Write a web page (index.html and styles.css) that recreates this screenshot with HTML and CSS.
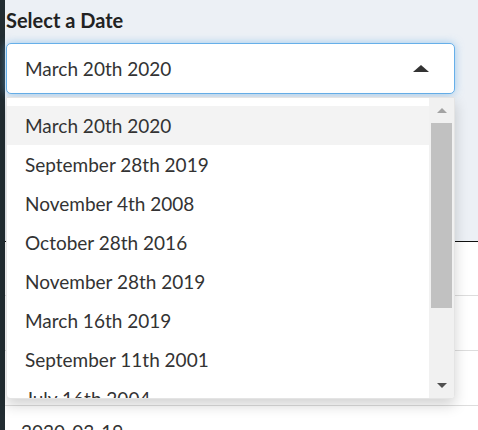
FILE: index.html
```html
<!DOCTYPE html>
<html>
<head>
<meta charset="utf-8">
<link rel="stylesheet" href="styles.css">
</head>
<body>
<div class="page">
  <aside class="sidebar"></aside>
  <main class="content">
    <div class="form-group">
      <label class="field-label">Select a Date</label>
      <div class="select-wrap">
        <div class="select">
          <span class="select-value">March 20th 2020</span>
          <span class="caret"></span>
        </div>
        <div class="dropdown">
          <ul class="options">
            <li class="option active">March 20th 2020</li>
            <li class="option">September 28th 2019</li>
            <li class="option">November 4th 2008</li>
            <li class="option">October 28th 2016</li>
            <li class="option">November 28th 2019</li>
            <li class="option">March 16th 2019</li>
            <li class="option">September 11th 2001</li>
            <li class="option">July 16th 2004</li>
            <li class="option">March 19th 2020</li>
          </ul>
          <div class="scrollbar">
            <div class="sb-btn"><span class="sb-arrow up"></span></div>
            <div class="sb-track"><div class="sb-thumb"></div></div>
            <div class="sb-btn"><span class="sb-arrow down"></span></div>
          </div>
        </div>
      </div>
    </div>
    <table class="data">
      <thead>
        <tr><th></th></tr>
      </thead>
      <tbody>
        <tr><td></td></tr>
        <tr><td></td></tr>
        <tr><td></td></tr>
        <tr><td>2020-03-19</td></tr>
      </tbody>
    </table>
  </main>
</div>
</body>
</html>
```

FILE: styles.css
```css
* { box-sizing: border-box; }
html, body { margin: 0; padding: 0; height: 100%; overflow: hidden; }
body {
  font-family: Lato, "Open Sans", sans-serif;
  color: #333;
  background: #ecf0f5;
}
.page { display: flex; height: 430px; overflow: hidden; }
.sidebar { width: 5px; flex: none; background: #222d32; }
.content { flex: 1; background: #ecf0f5; padding-top: 8px; }
.form-group { padding-left: 1px; }
.field-label {
  display: block;
  font-weight: 700;
  font-size: 20px;
  line-height: 25px;
  color: #222;
  margin-bottom: 10px;
}
.select-wrap { position: relative; width: 449px; }
.select {
  height: 51px;
  background: #fff;
  border: 1px solid #66afe9;
  border-radius: 5px;
  box-shadow: 0 0 8px rgba(102, 175, 233, 0.6);
  display: flex;
  align-items: center;
  justify-content: space-between;
  padding: 0 25px 0 18px;
  font-size: 19px;
  color: #333;
}
.caret {
  width: 0; height: 0;
  border-left: 8px solid transparent;
  border-right: 8px solid transparent;
  border-bottom: 7px solid #333;
}
.dropdown {
  position: absolute;
  top: 54px;
  left: 0;
  width: 449px;
  height: 302px;
  background: #fff;
  border: 1px solid #e4e4e4;
  border-radius: 0 0 4px 4px;
  box-shadow: 0 6px 14px rgba(0, 0, 0, 0.18);
  display: flex;
  overflow: hidden;
  z-index: 10;
}
.options {
  list-style: none;
  margin: 0;
  padding: 8px 0 0;
  flex: 1;
  overflow: hidden;
}
.option {
  height: 39px;
  line-height: 39px;
  padding-left: 18px;
  font-size: 19px;
  color: #333;
  white-space: nowrap;
}
.option.active { background: #f3f3f3; }
.scrollbar {
  width: 25px;
  flex: none;
  background: #f1f1f1;
  display: flex;
  flex-direction: column;
}
.sb-btn { height: 25px; display: flex; align-items: center; justify-content: center; flex: none; }
.sb-track { flex: 1; padding: 0 2px; }
.sb-thumb { height: 185px; background: #c1c1c1; }
.sb-arrow { width: 0; height: 0; border-left: 5px solid transparent; border-right: 5px solid transparent; }
.sb-arrow.up { border-bottom: 5px solid #a3a3a3; }
.sb-arrow.down { border-top: 5px solid #505050; }
.data {
  width: 100%;
  margin-top: 107px;
  border-collapse: collapse;
  background: #fff;
  font-size: 19px;
  line-height: 23px;
}
.data th {
  text-align: left;
  height: 40px;
  padding: 0 16px;
  border-bottom: 1px solid #111;
  background: #ecf0f5;
}
.data td {
  height: 55px;
  padding: 14px 16px 0;
  vertical-align: top;
  border-top: 1px solid #ddd;
  color: #333;
}
.data tbody tr:first-child td { border-top: none; height: 54px; }
```
